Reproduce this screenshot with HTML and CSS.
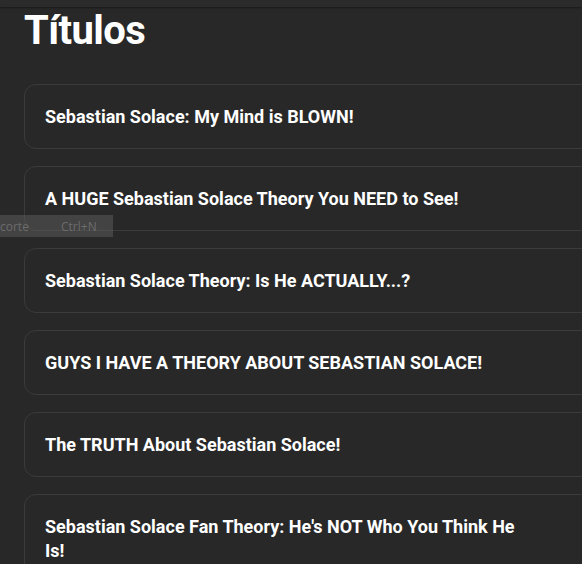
FILE: index.html
```html
<!DOCTYPE html>
<html lang="es">

<head>
    <meta charset="UTF-8">
    <meta name="viewport" content="width=device-width, initial-scale=1.0">
    <title>Títulos</title>
    <link rel="stylesheet" href="styles.css">
</head>

<body>
    <div class="topbar"></div>
    <div class="page">
        <h1 class="title">Títulos</h1>
        <div class="list">
            <div class="card"><p>Sebastian Solace: My Mind is BLOWN!</p></div>
            <div class="card"><p>A HUGE Sebastian Solace Theory You NEED to See!</p></div>
            <div class="card"><p>Sebastian Solace Theory: Is He ACTUALLY...?</p></div>
            <div class="card"><p>GUYS I HAVE A THEORY ABOUT SEBASTIAN SOLACE!</p></div>
            <div class="card"><p>The TRUTH About Sebastian Solace!</p></div>
            <div class="card"><p>Sebastian Solace Fan Theory: He's NOT Who You Think He Is!</p></div>
        </div>
    </div>
    <!-- resto de un menú contextual encima -->
    <div class="ghost-menu">
        <span class="ghost-label">corte</span>
        <span class="ghost-key">Ctrl+N</span>
    </div>
</body>

</html>
```

FILE: styles.css
```css
* {
    padding: 0;
    margin: 0;
    box-sizing: border-box;
}

html,
body {
    height: 100%;
}

body {
    background-color: #282828;
    color: #fff;
    font-family: Roboto, "Liberation Sans", sans-serif;
    overflow: hidden;
    position: relative;
}

.topbar {
    height: 7px;
    background-color: #2b2b2b;
    box-shadow: 0 1px 2px rgba(0, 0, 0, 0.35);
}

.page {
    padding-left: 24px;
}

.title {
    font-size: 40px;
    font-weight: 700;
    letter-spacing: -0.6px;
    line-height: 44px;
    height: 77px;
    padding-top: 2px;
}

.list {
    display: flex;
    flex-direction: column;
    gap: 17px;
}

.card {
    width: 620px;
    min-height: 65px;
    border: 1px solid #3b3b3b;
    border-radius: 12px;
    padding: 20px 20px 19px;
}

.card p {
    max-width: 485px;
    font-size: 18px;
    font-weight: 700;
    line-height: 24px;
}

.ghost-menu {
    position: absolute;
    left: 0;
    top: 215px;
    width: 113px;
    height: 22px;
    background-color: rgba(100, 100, 100, 0.45);
    display: flex;
    align-items: center;
    font-family: "Open Sans", "DejaVu Sans", sans-serif;
    font-size: 12px;
    color: #6c6c6c;
}

.ghost-label {
    width: 61px;
}
```
